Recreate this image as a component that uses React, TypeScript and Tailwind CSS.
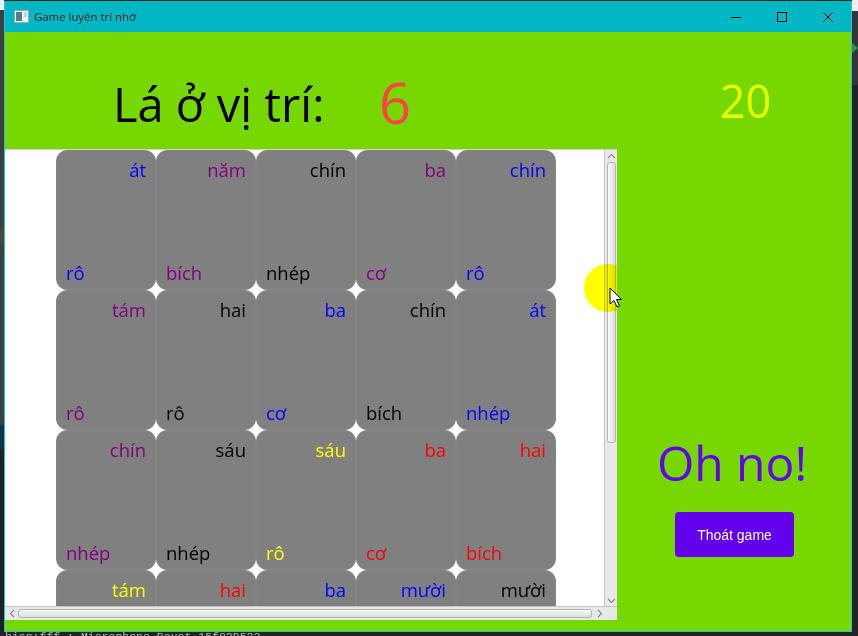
const rows = [
  [
    { top: "át", bottom: "rô", color: "text-[#0000ff]" },
    { top: "năm", bottom: "bích", color: "text-[#800080]" },
    { top: "chín", bottom: "nhép", color: "text-black" },
    { top: "ba", bottom: "cơ", color: "text-[#800080]" },
    { top: "chín", bottom: "rô", color: "text-[#0000ff]" },
  ],
  [
    { top: "tám", bottom: "rô", color: "text-[#800080]" },
    { top: "hai", bottom: "rô", color: "text-black" },
    { top: "ba", bottom: "cơ", color: "text-[#0000ff]" },
    { top: "chín", bottom: "bích", color: "text-black" },
    { top: "át", bottom: "nhép", color: "text-[#0000ff]" },
  ],
  [
    { top: "chín", bottom: "nhép", color: "text-[#800080]" },
    { top: "sáu", bottom: "nhép", color: "text-black" },
    { top: "sáu", bottom: "rô", color: "text-[#ffff00]" },
    { top: "ba", bottom: "cơ", color: "text-[#ff0000]" },
    { top: "hai", bottom: "bích", color: "text-[#ff0000]" },
  ],
  [
    { top: "tám", bottom: "", color: "text-[#ffff00]" },
    { top: "hai", bottom: "", color: "text-[#ff0000]" },
    { top: "ba", bottom: "", color: "text-[#0000ff]" },
    { top: "mười", bottom: "", color: "text-[#0000ff]" },
    { top: "mười", bottom: "", color: "text-black" },
  ],
];

const Card = ({ top, bottom, color }: { top: string; bottom: string; color: string }) => (
  <div
    className={`w-[100px] h-[140px] shrink-0 flex flex-col justify-between rounded-[11px] border border-[#858585] bg-[#808080] pl-[9px] pr-[9px] pt-[6px] pb-[3px] text-[18.5px] leading-[26px] ${color}`}
  >
    <div className="text-right">{top}</div>
    <div>{bottom}</div>
  </div>
);

const WindowButtons = () => (
  <div className="flex items-center text-black">
    <div className="w-[46px] flex justify-center">
      <svg width="12" height="12" viewBox="0 0 12 12">
        <path d="M1 6.5H11" stroke="currentColor" strokeWidth="1" />
      </svg>
    </div>
    <div className="w-[46px] flex justify-center">
      <svg width="12" height="12" viewBox="0 0 12 12">
        <rect x="1.5" y="1.5" width="9" height="9" fill="none" stroke="currentColor" strokeWidth="1" />
      </svg>
    </div>
    <div className="w-[46px] flex justify-center">
      <svg width="12" height="12" viewBox="0 0 12 12">
        <path d="M1 1L11 11M11 1L1 11" stroke="currentColor" strokeWidth="1" />
      </svg>
    </div>
  </div>
);

export default function App() {
  return (
    <div className="relative w-[858px] h-[636px] overflow-hidden bg-[#232323] flex flex-col font-['Open_Sans','Noto_Sans',sans-serif]">
      <div className="flex h-[632px] shrink-0">
        {/* desktop showing left of the window */}
        <div className="w-[4px] shrink-0 flex flex-col">
          <div className="h-[10px] bg-[#f0f0f0]" />
          <div className="h-[218px] bg-[#3a3f42]" />
          <div className="h-[17px] bg-[#4a4638]" />
          <div className="h-[180px] bg-[#3a3f42]" />
          <div className="h-[25px] bg-[#0e3348]" />
          <div className="flex-1 bg-[#1e2124]" />
        </div>

        <div className="w-[848px] h-[631px] mt-[1px] shrink-0 flex flex-col border border-t-0 border-[#25c4d8] bg-[#76d800]">
          {/* title bar */}
          <div className="h-[31px] shrink-0 flex items-center justify-between bg-[#00b7c3] pl-[9px]">
            <div className="flex items-center gap-[5px]">
              <svg width="15" height="13" viewBox="0 0 15 13">
                <rect x="0.5" y="0.5" width="14" height="12" fill="#f2f2f2" stroke="#9aa7ad" />
                <rect x="2" y="2" width="6" height="9" fill="#4c7f8c" />
                <rect x="10" y="2" width="3" height="5" fill="#c4d3d8" />
              </svg>
              <span className="text-[11.4px] text-[#0a1a20]">Game luyện trí nhớ</span>
            </div>
            <WindowButtons />
          </div>

          <div className="flex flex-1 min-h-0">
            {/* left column */}
            <div className="w-[612px] shrink-0 flex flex-col">
              <div className="h-[117px] shrink-0 flex items-start pl-[108px] pt-[35px]">
                <span className="text-[47px] leading-[70px] mt-[2px] text-black w-[266px]">Lá ở vị trí:</span>
                <span className="text-[56px] leading-[70px] text-[#ff4444]">6</span>
              </div>

              {/* scroll pane */}
              <div className="relative w-[612px] h-[471px] overflow-hidden bg-white border-t border-[#d0d0d0] flex flex-col">
                <div className="flex flex-1 min-h-0">
                  <div className="flex-1 overflow-hidden pl-[51px]">
                    {rows.map((row, i) => (
                      <div key={i} className="flex">
                        {row.map((card, j) => (
                          <Card key={j} {...card} />
                        ))}
                      </div>
                    ))}
                  </div>
                  {/* vertical scrollbar */}
                  <div className="w-[13px] shrink-0 flex flex-col items-center bg-[#e8e8e8] border-l border-[#c4c4c4]">
                    <svg width="9" height="11" viewBox="0 0 9 11" className="shrink-0 mt-[1px]">
                      <path d="M1 7L4.5 3.5L8 7" fill="none" stroke="#8c8c8c" strokeWidth="1.2" />
                    </svg>
                    <div className="w-[9px] h-[281px] rounded-[3px] border border-[#b4b4b4] bg-gradient-to-r from-[#f8f8f8] to-[#dedede]" />
                    <div className="flex-1" />
                    <svg width="9" height="11" viewBox="0 0 9 11" className="shrink-0">
                      <path d="M1 4L4.5 7.5L8 4" fill="none" stroke="#8c8c8c" strokeWidth="1.2" />
                    </svg>
                  </div>
                </div>
                {/* horizontal scrollbar */}
                <div className="h-[14px] shrink-0 flex items-center bg-[#e8e8e8] border-t border-[#c4c4c4]">
                  <svg width="13" height="9" viewBox="0 0 13 9" className="shrink-0">
                    <path d="M9 1L5.5 4.5L9 8" fill="none" stroke="#8c8c8c" strokeWidth="1.2" />
                  </svg>
                  <div className="w-[574px] h-[9px] rounded-[3px] border border-[#b4b4b4] bg-gradient-to-b from-[#f8f8f8] to-[#dedede]" />
                  <svg width="12" height="9" viewBox="0 0 12 9" className="shrink-0 ml-[2px]">
                    <path d="M4 1L7.5 4.5L4 8" fill="none" stroke="#8c8c8c" strokeWidth="1.2" />
                  </svg>
                </div>
                {/* cursor highlight */}
                <div className="absolute left-[579px] top-[114px] w-[48px] h-[48px] rounded-full bg-[#ffff00] mix-blend-multiply" />
              </div>
            </div>

            {/* right column */}
            <div className="flex-1 flex flex-col items-center">
              <div className="h-[118px] shrink-0 pt-[39px] pl-[23px] text-[45px] leading-[60px] text-[#e6ff00]">20</div>
              <div className="mt-[280px] -ml-[4px] text-[48px] leading-[66px] text-[#6200ee]">Oh no!</div>
              <button className="mt-[16px] ml-[1px] w-[119px] h-[45px] pt-[1px] rounded-[4px] bg-[#6200ee] text-[14px] text-white font-['Liberation_Sans',sans-serif]">
                Thoát game
              </button>
            </div>
          </div>
        </div>

        {/* desktop showing right of the window */}
        <div className="flex-1 flex flex-col">
          <div className="h-[11px] bg-[#f0f0f0]" />
          <div className="h-[74px] bg-[#32363a] flex items-center">
            <svg width="6" height="10" viewBox="0 0 6 10">
              <path d="M0 0L6 5L0 10Z" fill="#2f8f4f" />
            </svg>
          </div>
        </div>
      </div>

      {/* terminal line behind the window, cut by the bottom edge */}
      <div className="h-[4px] overflow-hidden pl-[5px] font-['Liberation_Mono',monospace] text-[11.5px] leading-[12px] text-[#b8b8b8] whitespace-nowrap">
        <div className="-mt-[1px]">bisn:fff ; Microphone Bouot 15f82B522</div>
      </div>

      {/* mouse pointer */}
      <svg className="absolute left-[609px] top-[287px]" width="14" height="22" viewBox="0 0 14 22">
        <path d="M1 1V17L5 13.5L8 20L10.5 19L7.5 12.5L12.5 12.5Z" fill="#ffffff" stroke="#000000" strokeWidth="1" />
      </svg>
    </div>
  );
}
